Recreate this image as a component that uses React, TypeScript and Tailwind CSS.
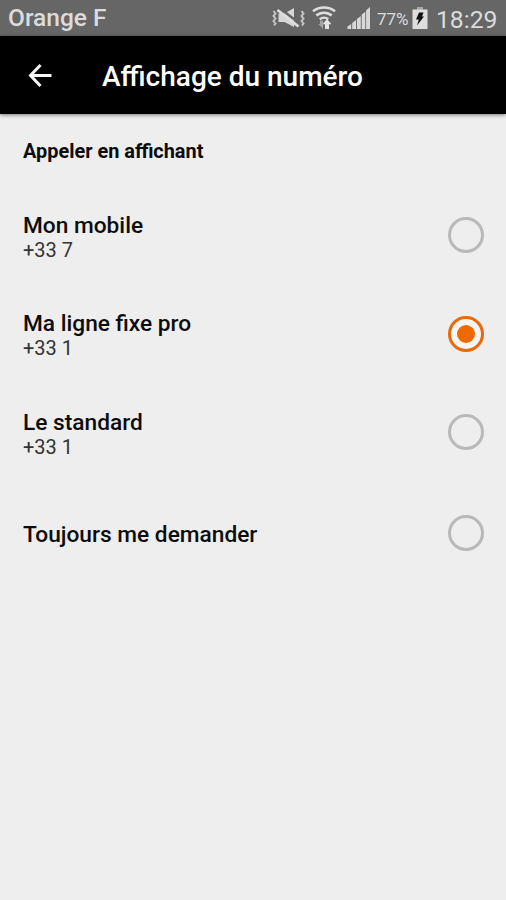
import { useState } from "react";
import clsx from "clsx";

type CallerOption = {
  id: string;
  label: string;
  number?: string;
};

const options: CallerOption[] = [
  { id: "mobile", label: "Mon mobile", number: "+33 7" },
  { id: "landline", label: "Ma ligne fixe pro", number: "+33 1" },
  { id: "switchboard", label: "Le standard", number: "+33 1" },
  { id: "ask", label: "Toujours me demander" },
];

function VibrateMuteIcon() {
  return (
    <svg className="h-6 w-[34px]" viewBox="0 0 34 24" fill="none">
      <path d="M7.500 7.500h6L23 2v19l-9.500-5h-6z" fill="#d6d6d6" />
      <path d="M8.500 2L30 18.500" stroke="#666" strokeWidth="2.400" />
      <path d="M6.500 4L27.500 20.500" stroke="#dedede" strokeWidth="2.800" />
      <path
        d="M2.500 5l2 2.500-2 2.500 2 2.500-2 2.500 2 2.500-1.500 2M30.500 5l2 2.500-2 2.500 2 2.500-2 2.500 2 2.500-1.500 2"
        stroke="#c4c4c4"
        strokeWidth="2"
      />
    </svg>
  );
}

function WifiIcon() {
  return (
    <svg className="h-6 w-6" viewBox="0 0 24 24" fill="none">
      <g stroke="#dedede" strokeWidth="2.500">
        <path d="M1 5.300c6.400-5 15.600-5 22 0" />
        <path d="M4.300 9.500c4.400-3.800 11-3.800 15.400 0" />
        <path d="M7.800 13.200c2.400-2 6-2 8.400 0" />
      </g>
      <path d="M8 14.500h3V23L6.500 18H8z" fill="#a3a3a3" />
      <path d="M15 13l4.500 5.200h-2.500V23h-4v-4.800h-2.500z" fill="#e4e4e4" />
    </svg>
  );
}

function SignalIcon() {
  return (
    <svg className="h-6 w-6" viewBox="0 0 24 24" fill="#d8d8d8">
      <path d="M0.500 20.500L4.200 18v5H0.500z" />
      <path d="M5.200 17L9 14v9H5.200z" />
      <path d="M9.900 13l3.900-3v13H9.900z" />
      <path d="M14.700 8.500l3.600-2.800V23h-3.600z" />
      <path d="M19.100 4.500L23 1v22h-3.900z" />
    </svg>
  );
}

function BatteryIcon() {
  return (
    <svg className="h-6 w-4" viewBox="0 0 16 24">
      <path d="M5 1h6v3H5z" fill="#a8a8a8" />
      <path d="M0.500 3.500h15V23H0.500z" fill="#dedede" />
      <path d="M7 6.500h4.500L10 10.500h2L5 19.500l1.800-6H4z" fill="#111" />
    </svg>
  );
}

function StatusBar() {
  return (
    <div className="flex h-9 items-center bg-[#666] pl-2 text-[#dcdcdc]">
      <p className="w-[263px] pt-px text-[24.500px] font-medium">Orange F</p>
      <VibrateMuteIcon />
      <div className="ml-[7px]">
        <WifiIcon />
      </div>
      <div className="ml-[11px]">
        <SignalIcon />
      </div>
      <p className="ml-[6px] w-[35px] pt-[3px] text-[17px]">77%</p>
      <BatteryIcon />
      <p className="ml-[8px] pt-[4px] text-[24.700px]">18:29</p>
    </div>
  );
}

function Header() {
  return (
    <header className="z-10 flex h-[78px] items-center bg-black pb-px pl-[28px] text-white shadow-[0_1px_4px_rgba(0,0,0,0.5)]">
      <button type="button" aria-label="Retour">
        <svg
          className="h-6 w-6"
          viewBox="0 0 24 24"
          fill="none"
          stroke="#f5f5f5"
          strokeWidth="3"
        >
          <path d="M12.500 2L2.500 12.500 12.500 23M2.500 12.500H23.500" />
        </svg>
      </button>
      <h1 className="pt-1 pl-[50px] text-[28px] font-medium">
        Affichage du numéro
      </h1>
    </header>
  );
}

type OptionRowProps = {
  option: CallerOption;
  checked: boolean;
  onSelect: () => void;
};

function OptionRow({ option, checked, onSelect }: OptionRowProps) {
  return (
    <button
      type="button"
      role="radio"
      aria-checked={checked}
      className={clsx(
        "flex w-full items-center justify-between pr-[22px] pl-[23px] text-left",
        option.number ? "h-[98.5px]" : "h-[102px]",
      )}
      onClick={onSelect}
    >
      <span className={clsx("block", option.number ? "pt-[3px]" : "pt-[4px]")}>
        <span className="block text-[22.700px] leading-[26px] font-medium">
          {option.label}
        </span>
        {option.number && (
          <span className="block text-[20px] leading-[22px] text-[#333]">
            {option.number}
          </span>
        )}
      </span>
      <span
        className={clsx(
          "flex size-[36px] items-center justify-center rounded-full border-3",
          checked ? "border-[#eb6909] bg-[#f6f6f6]" : "border-[#b9b9b9]",
        )}
      >
        {checked && <span className="size-[18px] rounded-full bg-[#ee6a00]" />}
      </span>
    </button>
  );
}

function App() {
  const [selected, setSelected] = useState<string>("landline");

  return (
    <div className="flex h-[900px] w-[506px] flex-col overflow-hidden bg-[#eee] font-[Roboto,sans-serif] text-[#0c0c0c]">
      <StatusBar />
      <Header />
      <main>
        <h2 className="h-[72px] pt-[26px] pl-[23px] text-[19.900px] leading-[24px] font-bold">
          Appeler en affichant
        </h2>
        <div role="radiogroup">
          {options.map((option) => (
            <OptionRow
              key={option.id}
              option={option}
              checked={option.id === selected}
              onSelect={() => setSelected(option.id)}
            />
          ))}
        </div>
      </main>
    </div>
  );
}

export default App;
